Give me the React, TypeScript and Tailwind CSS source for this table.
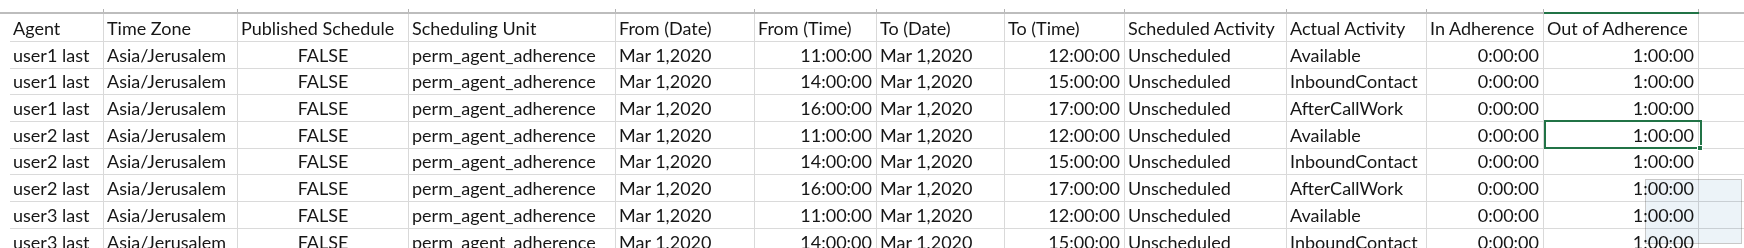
import React from 'react';

type Align = 'left' | 'right' | 'center';

interface Column {
  title: string;
  width: number;
  align: Align;
}

const columns: Column[] = [
  { title: 'Agent', width: 94, align: 'left' },
  { title: 'Time Zone', width: 134, align: 'left' },
  { title: 'Published Schedule', width: 171, align: 'center' },
  { title: 'Scheduling Unit', width: 207, align: 'left' },
  { title: 'From (Date)', width: 139, align: 'left' },
  { title: 'From (Time)', width: 122, align: 'right' },
  { title: 'To (Date)', width: 128, align: 'left' },
  { title: 'To (Time)', width: 120, align: 'right' },
  { title: 'Scheduled Activity', width: 162, align: 'left' },
  { title: 'Actual Activity', width: 140, align: 'left' },
  { title: 'In Adherence', width: 117, align: 'right' },
  { title: 'Out of Adherence', width: 155, align: 'right' },
];

const slots = [
  ['11:00:00', '12:00:00', 'Available'],
  ['14:00:00', '15:00:00', 'InboundContact'],
  ['16:00:00', '17:00:00', 'AfterCallWork'],
];

const rows: string[][] = [
  ['user1 last', 0],
  ['user1 last', 1],
  ['user1 last', 2],
  ['user2 last', 0],
  ['user2 last', 1],
  ['user2 last', 2],
  ['user3 last', 0],
  ['user3 last', 1],
].map(([agent, i]) => {
  const [from, to, actual] = slots[i as number];
  return [
    agent as string,
    'Asia/Jerusalem',
    'FALSE',
    'perm_agent_adherence',
    'Mar 1,2020',
    from,
    'Mar 1,2020',
    to,
    'Unscheduled',
    actual,
    '0:00:00',
    '1:00:00',
  ];
});

// row heights incl. 1px bottom gridline
const heights = [28, 27, 26, 27, 27, 26, 27, 27, 27];

const alignClass = (a: Align) =>
  a === 'right' ? 'justify-end pr-[4px]' : a === 'center' ? 'justify-center' : 'justify-start pl-[3px]';

const Cell = ({ text, col }: { text: string; col: Column }) => (
  <div
    className={`flex items-end shrink-0 overflow-hidden whitespace-nowrap pb-[3px] border-r border-[#d9d9d9] ${alignClass(col.align)}`}
    style={{ width: col.width }}
  >
    <span className="leading-[20px]">{text}</span>
  </div>
);

const Row = ({ cells, height, header }: { cells: string[]; height: number; header?: boolean }) => (
  <div className="flex border-b border-[#dadada]" style={{ height }}>
    {cells.map((c, i) => (
      <Cell
        key={i}
        text={c}
        col={header ? { ...columns[i], align: 'left' } : columns[i]}
      />
    ))}
    <div className="flex-1" />
  </div>
);

export default function App() {
  return (
    <div
      className="relative w-[1744px] h-[248px] overflow-hidden bg-white text-[18px] text-[#161616]"
      style={{ fontFamily: 'Lato, "Open Sans", sans-serif' }}
    >
      {/* column header remnants */}
      <div className="flex h-[12px] pl-[10px]">
        {columns.map((c, i) => (
          <div key={i} className="flex shrink-0 items-end justify-end" style={{ width: c.width }}>
            <div className="h-[3px] w-px bg-[#b4b4b4]" />
          </div>
        ))}
        <div className="flex-1" />
      </div>
      <div className="flex h-[2px] pl-[10px] bg-[#bdbdbd]">
        {columns.map((c, i) => (
          <div
            key={i}
            className={`shrink-0 ${i === 11 ? 'bg-[#217346]' : 'bg-[#bdbdbd]'}`}
            style={{ width: c.width }}
          />
        ))}
        <div className="flex-1 bg-[#bdbdbd]" />
      </div>

      <div className="pl-[10px]">
        <Row cells={columns.map((c) => c.title)} height={heights[0]} header />
        {rows.map((r, i) => (
          <Row key={i} cells={r} height={heights[i + 1]} />
        ))}
      </div>

      {/* selected cell */}
      <div className="absolute left-[1544px] top-[120px] w-[158px] h-[29px] border-2 border-[#217346]" />
      <div className="absolute left-[1697px] top-[145px] w-[6px] h-[6px] bg-[#217346] border border-white" />

      {/* quick analysis overlay */}
      <div className="absolute left-[1645px] top-[179px] w-[97px] h-[65px] border border-[#c8c8c8] bg-[#ecf3f8] mix-blend-multiply" />
    </div>
  );
}
